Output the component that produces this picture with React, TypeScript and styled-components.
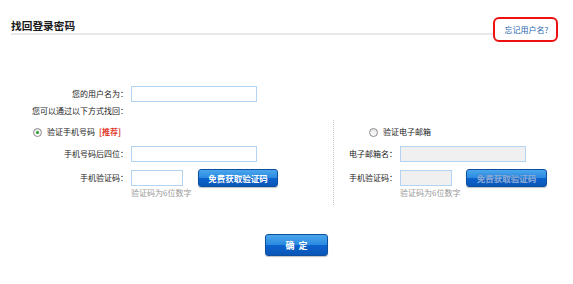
import React from "react";
import styled, { createGlobalStyle } from "styled-components";

const Global = createGlobalStyle`
  html, body { margin: 0; padding: 0; background: #fff; }
  body { font-family: "Noto Sans CJK SC", "Noto Sans", sans-serif; color: #222; }
  * { box-sizing: border-box; }
`;

const Page = styled.div`
  width: 573px;
  height: 284px;
  padding: 17px 15px 0 11px;
`;

const Header = styled.div`
  display: flex;
  align-items: flex-start;
  height: 25px;
`;

const TitleBar = styled.div`
  flex: 1;
  height: 18px;
  display: flex;
  align-items: center;
  border-bottom: 2px solid #e8e8e8;
  padding-top: 2px;
`;

const Title = styled.h1`
  margin: 0;
  font-size: 10.7px;
  font-weight: bold;
  color: #1a1a1a;
  line-height: 12px;
`;

const Highlight = styled.div`
  width: 65px;
  height: 25px;
  border: 2px solid #ee1111;
  border-radius: 6px;
  display: flex;
  align-items: center;
  justify-content: center;
  padding-left: 2px;
`;

const Link = styled.a`
  font-size: 8px;
  color: #2563ae;
  text-decoration: none;
  line-height: 10px;
`;

const Form = styled.div`
  padding-top: 44px;
`;

const Row = styled.div<{ $h?: number; $mt?: number }>`
  display: flex;
  align-items: center;
  height: ${(p) => p.$h ?? 16}px;
  margin-top: ${(p) => p.$mt ?? 0}px;
`;

const Label = styled.span<{ $w: number }>`
  width: ${(p) => p.$w}px;
  margin-right: 3px;
  text-align: right;
  font-size: 8px;
  line-height: 12px;
  color: #1a1a1a;
  white-space: nowrap;
`;

const Plain = styled.span`
  font-size: 8px;
  line-height: 12px;
  color: #1a1a1a;
  white-space: nowrap;
`;

const Input = styled.input<{ $w: number }>`
  width: ${(p) => p.$w}px;
  height: 16px;
  border: 1px solid #b3d3f3;
  background: ${(p) => (p.disabled ? "#f0f0f0" : "#fff")};
  padding: 0 3px;
  font-size: 8px;
  outline: none;
  margin: 0;
`;

const Columns = styled.div`
  display: flex;
  margin-top: 3px;
`;

const Column = styled.div<{ $w?: number; $divider?: boolean }>`
  width: ${(p) => (p.$w ? `${p.$w}px` : "auto")};
  flex: ${(p) => (p.$w ? "none" : "1")};
  display: flex;
  flex-direction: column;
  padding-bottom: 7px;
  border-left: ${(p) => (p.$divider ? "1px dotted #c8c8c8" : "none")};
`;

const RadioRow = styled.div<{ $pl: number }>`
  display: flex;
  align-items: center;
  height: 12px;
  margin-top: 6px;
  padding-left: ${(p) => p.$pl}px;
`;

const Radio = styled.span<{ $on?: boolean }>`
  width: 9px;
  height: 9px;
  border-radius: 50%;
  border: 1px solid #8a8a8a;
  background: linear-gradient(#e4e4e4, #fff);
  display: flex;
  align-items: center;
  justify-content: center;
  margin-right: 5px;
  &::after {
    content: "";
    width: 3px;
    height: 3px;
    border-radius: 50%;
    background: ${(p) => (p.$on ? "#2e9a2e" : "transparent")};
  }
`;

const Tag = styled.span`
  font-size: 8px;
  font-weight: bold;
  line-height: 12px;
  color: #e23a2a;
  margin-left: 4px;
`;

const BlueButton = styled.button<{ $off?: boolean; $w: number; $h: number; $fs: number; $ml?: number }>`
  width: ${(p) => p.$w}px;
  height: ${(p) => p.$h}px;
  margin: 0 0 0 ${(p) => p.$ml ?? 0}px;
  padding: 0;
  border: 1px solid #0c4f9f;
  border-radius: 3px;
  background: linear-gradient(#4aa6ec 0%, #2b8ae0 48%, #0c62cc 52%, #0b56b8 100%);
  color: ${(p) => (p.$off ? "#86a9d8" : "#fff")};
  text-shadow: ${(p) => (p.$off ? "0 0 1px #3d78c4" : "none")};
  font-family: "Noto Sans CJK SC", sans-serif;
  font-size: ${(p) => p.$fs}px;
  font-weight: bold;
  line-height: 1;
  display: flex;
  align-items: center;
  justify-content: center;
  box-shadow: 0 1px 1px rgba(0, 0, 0, 0.25);
  cursor: pointer;
`;

const Hint = styled.div<{ $ml: number }>`
  margin-top: 1px;
  margin-left: ${(p) => p.$ml}px;
  height: 10px;
  font-size: 8px;
  line-height: 10px;
  color: #999;
`;

const Submit = styled.div`
  margin-top: 29px;
  padding-left: 254px;
`;

export default function App() {
  return (
    <Page>
      <Global />
      <Header>
        <TitleBar>
          <Title>找回登录密码</Title>
        </TitleBar>
        <Highlight>
          <Link href="#">忘记用户名?</Link>
        </Highlight>
      </Header>
      <Form>
        <Row>
          <Label $w={117}>您的用户名为：</Label>
          <Input $w={126} />
        </Row>
        <Row $h={12} $mt={3}>
          <Label $w={117}>您可以通过以下方式找回：</Label>
        </Row>
        <Columns>
          <Column $w={322}>
            <RadioRow $pl={22}>
              <Radio $on />
              <Plain>验证手机号码</Plain>
              <Tag>[推荐]</Tag>
            </RadioRow>
            <Row $h={18} $mt={7}>
              <Label $w={117}>手机号码后四位：</Label>
              <Input $w={126} />
            </Row>
            <Row $h={18} $mt={6}>
              <Label $w={117}>手机验证码：</Label>
              <Input $w={52} />
              <BlueButton $w={80} $h={18} $fs={8.5} $ml={15}>免费获取验证码</BlueButton>
            </Row>
            <Hint $ml={120}>验证码为6位数字</Hint>
          </Column>
          <Column $divider>
            <RadioRow $pl={35}>
              <Radio />
              <Plain>验证电子邮箱</Plain>
            </RadioRow>
            <Row $h={18} $mt={7}>
              <Label $w={63}>电子邮箱名：</Label>
              <Input $w={126} disabled />
            </Row>
            <Row $h={18} $mt={6}>
              <Label $w={63}>手机验证码：</Label>
              <Input $w={52} disabled />
              <BlueButton $off $w={81} $h={18} $fs={8.5} $ml={14}>免费获取验证码</BlueButton>
            </Row>
            <Hint $ml={66}>验证码为6位数字</Hint>
          </Column>
        </Columns>
        <Submit>
          <BlueButton $w={63} $h={22} $fs={9}>确&nbsp;&nbsp;定</BlueButton>
        </Submit>
      </Form>
    </Page>
  );
}
